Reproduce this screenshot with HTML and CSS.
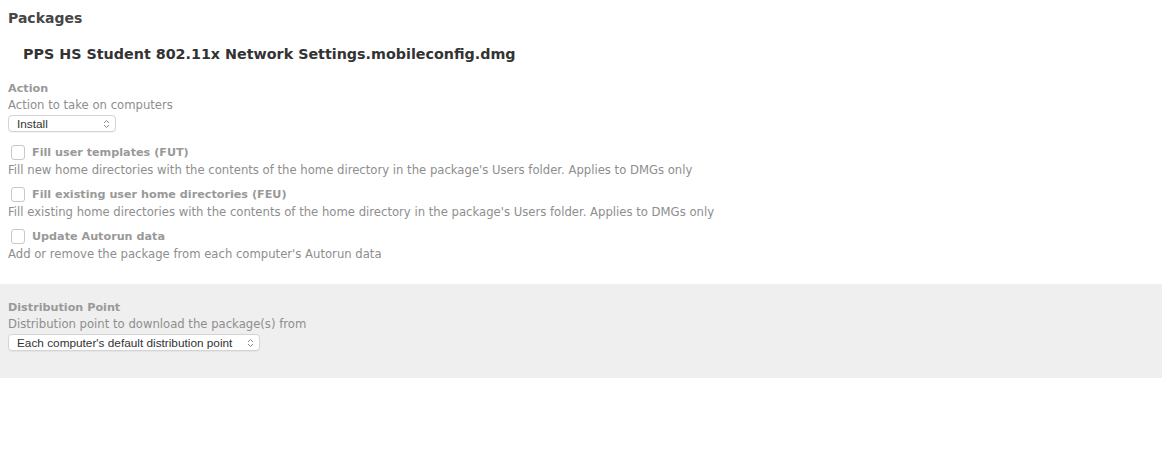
FILE: index.html
```html
<!DOCTYPE html>
<html>
<head>
<meta charset="utf-8">
<link rel="stylesheet" href="styles.css">
</head>
<body>
<div class="page">
  <h1 class="title">Packages</h1>
  <h2 class="pkg">PPS HS Student 802.11x Network Settings.mobileconfig.dmg</h2>
  <div class="section">
    <div class="label">Action</div>
    <div class="desc">Action to take on computers</div>
    <div class="select sel-action"><span>Install</span><span class="arrows">
      <svg width="7" height="10" viewBox="0 0 7 10"><path d="M1 4 L3.5 1.5 L6 4 M1 6 L3.5 8.5 L6 6" fill="none" stroke="#8a8a8a" stroke-width="1"/></svg></span></div>
    <div class="check-row"><span class="box"></span><span class="check-label">Fill user templates (FUT)</span></div>
    <div class="desc d2">Fill new home directories with the contents of the home directory in the package's Users folder. Applies to DMGs only</div>
    <div class="check-row"><span class="box"></span><span class="check-label">Fill existing user home directories (FEU)</span></div>
    <div class="desc d2">Fill existing home directories with the contents of the home directory in the package's Users folder. Applies to DMGs only</div>
    <div class="check-row"><span class="box"></span><span class="check-label">Update Autorun data</span></div>
    <div class="desc d2">Add or remove the package from each computer's Autorun data</div>
  </div>
  <div class="band">
    <div class="label">Distribution Point</div>
    <div class="desc">Distribution point to download the package(s) from</div>
    <div class="select sel-dist"><span>Each computer's default distribution point</span><span class="arrows">
      <svg width="7" height="10" viewBox="0 0 7 10"><path d="M1 4 L3.5 1.5 L6 4 M1 6 L3.5 8.5 L6 6" fill="none" stroke="#8a8a8a" stroke-width="1"/></svg></span></div>
  </div>
</div>
</body>
</html>
```
FILE: styles.css
```css
* { box-sizing: border-box; }
html, body { margin: 0; padding: 0; background: #fff; }
body { font-family: "DejaVu Sans", Verdana, sans-serif; font-size: 12px; }
.page { padding-top: 8px; }
.title { margin: 0 0 0 8px; font-size: 14px; font-weight: bold; color: #464646; line-height: 20px; }
.pkg { margin: 16px 0 0 23px; font-size: 14.3px; font-weight: bold; color: #333; line-height: 20px; }
.section { padding: 0 8px; margin-top: 17px; }
.label { font-weight: bold; color: #999; font-size: 11.2px; line-height: 16px; }
.desc { color: #8e8e8e; font-size: 11.65px; line-height: 16px; }
.d2 { margin-top: 2px; }
.select { display: flex; align-items: center; justify-content: space-between; height: 17px; border: 1px solid #d4d4d4; border-radius: 4px; background: #fff; font-family: "Liberation Sans", Arial, sans-serif; font-size: 11.8px; color: #333; padding: 0 5px 0 8px; margin-top: 2px; margin-bottom: 12px; box-shadow: 0 1px 0 rgba(0,0,0,0.04); }
.sel-action { width: 108px; }
.sel-dist { width: 252px; }
.arrows { display: flex; align-items: center; }
.check-row { display: flex; align-items: center; gap: 7px; margin-top: 8px; padding-left: 3px; height: 16px; }
.box { width: 14px; height: 15px; border: 1px solid #c8c8c8; border-radius: 3px; background: #fff; }
.check-label { font-weight: bold; color: #999; font-size: 11.2px; }
.band { background: #efefef; margin-top: 22px; padding: 16px 8px 27px; }
.band .select { margin-bottom: 0; }
```
